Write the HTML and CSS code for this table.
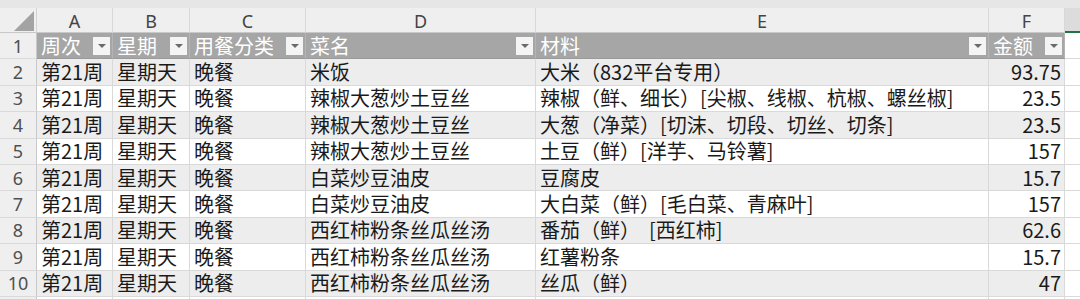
FILE: index.html
```html
<!DOCTYPE html>
<html lang="zh-CN">
<head>
<meta charset="utf-8">
<title>Sheet</title>
<link rel="stylesheet" href="styles.css">
</head>
<body>
<div class="topband"></div>
<div class="sheet">
  <div class="corner"><span class="selall"></span></div>
  <div class="colh">A</div>
  <div class="colh">B</div>
  <div class="colh">C</div>
  <div class="colh">D</div>
  <div class="colh">E</div>
  <div class="colh">F</div>
  <div class="colh colh-sel"></div>

  <div class="rowh">1</div>
  <div class="th"><span>周次</span><span class="dd"></span></div>
  <div class="th"><span>星期</span><span class="dd"></span></div>
  <div class="th"><span>用餐分类</span><span class="dd"></span></div>
  <div class="th"><span>菜名</span><span class="dd"></span></div>
  <div class="th"><span>材料</span><span class="dd"></span></div>
  <div class="th"><span>金额</span><span class="dd"></span></div>
  <div class="cell empty"></div>

  <div class="rowh">2</div>
  <div class="cell band">第21周</div><div class="cell band">星期天</div><div class="cell band">晚餐</div><div class="cell band">米饭</div><div class="cell band">大米（832平台专用）</div><div class="cell band num">93.75</div><div class="cell empty"></div>

  <div class="rowh">3</div>
  <div class="cell">第21周</div><div class="cell">星期天</div><div class="cell">晚餐</div><div class="cell">辣椒大葱炒土豆丝</div><div class="cell">辣椒（鲜、细长）[尖椒、线椒、杭椒、螺丝椒]</div><div class="cell num">23.5</div><div class="cell empty"></div>

  <div class="rowh">4</div>
  <div class="cell band">第21周</div><div class="cell band">星期天</div><div class="cell band">晚餐</div><div class="cell band">辣椒大葱炒土豆丝</div><div class="cell band">大葱（净菜）[切沫、切段、切丝、切条]</div><div class="cell band num">23.5</div><div class="cell empty"></div>

  <div class="rowh">5</div>
  <div class="cell">第21周</div><div class="cell">星期天</div><div class="cell">晚餐</div><div class="cell">辣椒大葱炒土豆丝</div><div class="cell">土豆（鲜）[洋芋、马铃薯]</div><div class="cell num">157</div><div class="cell empty"></div>

  <div class="rowh">6</div>
  <div class="cell band">第21周</div><div class="cell band">星期天</div><div class="cell band">晚餐</div><div class="cell band">白菜炒豆油皮</div><div class="cell band">豆腐皮</div><div class="cell band num">15.7</div><div class="cell empty"></div>

  <div class="rowh">7</div>
  <div class="cell">第21周</div><div class="cell">星期天</div><div class="cell">晚餐</div><div class="cell">白菜炒豆油皮</div><div class="cell">大白菜（鲜）[毛白菜、青麻叶]</div><div class="cell num">157</div><div class="cell empty"></div>

  <div class="rowh">8</div>
  <div class="cell band">第21周</div><div class="cell band">星期天</div><div class="cell band">晚餐</div><div class="cell band">西红柿粉条丝瓜丝汤</div><div class="cell band">番茄（鲜）  [西红柿]</div><div class="cell band num">62.6</div><div class="cell empty"></div>

  <div class="rowh">9</div>
  <div class="cell">第21周</div><div class="cell">星期天</div><div class="cell">晚餐</div><div class="cell">西红柿粉条丝瓜丝汤</div><div class="cell">红薯粉条</div><div class="cell num">15.7</div><div class="cell empty"></div>

  <div class="rowh">10</div>
  <div class="cell band">第21周</div><div class="cell band">星期天</div><div class="cell band">晚餐</div><div class="cell band">西红柿粉条丝瓜丝汤</div><div class="cell band">丝瓜（鲜）</div><div class="cell band num">47</div><div class="cell empty"></div>

  <div class="rowh stub"></div>
  <div class="cell stub"></div><div class="cell stub"></div><div class="cell stub"></div><div class="cell stub"></div><div class="cell stub"></div><div class="cell stub"></div><div class="cell empty stub"></div>
</div>
</body>
</html>
```

FILE: styles.css
```css
html, body {
  margin: 0;
  padding: 0;
  background: #ffffff;
  overflow: hidden;
}

body {
  font-family: "Noto Sans CJK SC", "Noto Sans", sans-serif;
  font-size: 20px;
  line-height: 22px;
  color: #1a1a1a;
}

.topband {
  height: 8px;
  background: #e6e6e6;
}

.sheet {
  display: grid;
  grid-template-columns: 37px 76px 77px 116px 230px 453px 76px 15px;
  grid-template-rows: 25px repeat(10, 26.4px) 2px;
  height: 291px;
  overflow: hidden;
}

.sheet > div {
  box-sizing: border-box;
  white-space: pre;
  min-width: 0;
}

.corner {
  background: #efefef;
  border-right: 1px solid #d3d3d3;
  border-bottom: 1px solid #c8c8c8;
  position: relative;
}

.selall {
  position: absolute;
  right: 2px;
  bottom: 1px;
  width: 0;
  height: 0;
  border-left: 20px solid transparent;
  border-bottom: 20px solid #a3a3a3;
}

.colh {
  background: #efefef;
  color: #444444;
  font-family: "Noto Sans", "Liberation Sans", sans-serif;
  font-size: 18px;
  line-height: 20px;
  display: flex;
  align-items: center;
  justify-content: center;
  border-right: 1px solid #d8d8d8;
  border-bottom: 1px solid #c8c8c8;
  padding-top: 2px;
}

.colh-sel {
  background: #dcdcdc;
  border-right: none;
  border-bottom: 2px solid #217346;
}

.rowh {
  background: #efefef;
  color: #505050;
  font-family: "Noto Sans", "Liberation Sans", sans-serif;
  font-size: 18px;
  line-height: 20px;
  display: flex;
  align-items: center;
  justify-content: center;
  border-right: 1px solid #c8c8c8;
  border-bottom: 1px solid #dadada;
}

.th {
  background: #a6a6a6;
  color: #ffffff;
  display: flex;
  align-items: center;
  padding-left: 4px;
  padding-right: 2px;
  border-right: 1px solid #b4b4b4;
  border-bottom: 1px solid #9a9a9a;
}

.dd {
  margin-left: auto;
  width: 17px;
  height: 18px;
  flex: none;
  background: #f4f4f4;
  display: flex;
  align-items: center;
  justify-content: center;
}

.dd::after {
  content: "";
  width: 0;
  height: 0;
  border-left: 4px solid transparent;
  border-right: 4px solid transparent;
  border-top: 4px solid #6a6a6a;
}

.cell {
  display: flex;
  align-items: center;
  padding-left: 4px;
  padding-right: 3px;
  background: #ffffff;
  border-right: 1px solid #d9d9d9;
  border-bottom: 1px solid #d9d9d9;
}

.cell.band {
  background: #ededed;
}

.cell.num {
  justify-content: flex-end;
}

.cell.empty {
  border-right: none;
  background: #ffffff;
}

.stub {
  border-bottom: none !important;
}
```
